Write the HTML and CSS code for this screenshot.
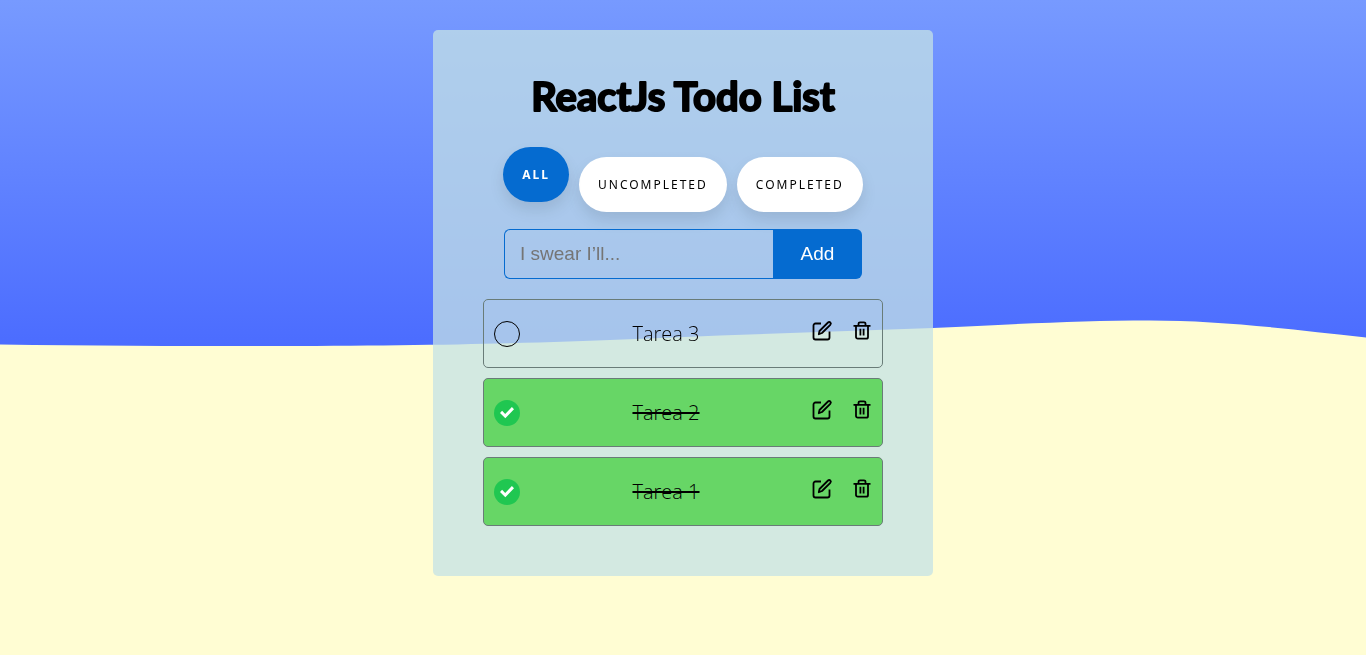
FILE: index.html
```html
<!DOCTYPE html>
<html lang="en">
<head>
<meta charset="utf-8">
<meta name="viewport" content="width=device-width, initial-scale=1">
<title>ReactJs Todo List</title>
<link rel="stylesheet" href="styles.css">
</head>
<body>
<svg class="scene" viewBox="0 0 1366 655" preserveAspectRatio="none" aria-hidden="true">
  <path d="M0 344.5C90 346 180 346 260 346C500 346 610 340 720 335.500L933 328C1020 324 1080 320.500 1150 320.500C1220 320.500 1290 329 1366 337.500V655H0Z"/>
</svg>
<svg class="sprite" aria-hidden="true">
  <symbol id="edit" viewBox="0 0 24 24"><path d="M11 4.500H5.500A2 2 0 0 0 3.500 6.500v12A2 2 0 0 0 5.500 20.500h12a2 2 0 0 0 2-2V12.500M9.500 12 18 3.500a1.600 1.600 0 0 1 2.300 2.300L12 14 8.800 15.200Z"/></symbol>
  <symbol id="trash" viewBox="0 0 24 24"><path d="M3.500 6.800H20.500M6 6.800V18A1.700 1.700 0 0 0 7.700 19.700H16.300a1.700 1.700 0 0 0 1.700-1.700V6.800M8.500 6.500V4.800a1.500 1.500 0 0 1 1.500-1.500h4a1.500 1.500 0 0 1 1.500 1.500v1.700M10.400 9.800v6.700M13.600 9.800v6.700"/></symbol>
</svg>
<main class="panel">
  <h1 class="title"><svg class="title-art"><text class="title-text" x="50%" y="41">ReactJs Todo List</text></svg></h1>
  <nav class="filters" aria-label="Filter tasks">
    <button class="filter filter-active" type="button">All</button>
    <button class="filter" type="button">Uncompleted</button>
    <button class="filter" type="button">Completed</button>
  </nav>
  <form class="add-form">
    <input class="add-input" type="text" aria-label="New task" placeholder="I swear I’ll...">
    <button class="add-button" type="button">Add</button>
  </form>
  <ul class="tasks">
    <li class="task">
      <input class="check" type="checkbox" id="t3">
      <label class="name" for="t3">Tarea 3</label>
      <div class="actions">
        <button class="action" type="button" aria-label="Edit Tarea 3"><svg class="icon"><use href="#edit"/></svg></button>
        <button class="action" type="button" aria-label="Delete Tarea 3"><svg class="icon"><use href="#trash"/></svg></button>
      </div>
    </li>
    <li class="task task-done">
      <input class="check" type="checkbox" id="t2" checked>
      <label class="name" for="t2">Tarea 2</label>
      <div class="actions">
        <button class="action" type="button" aria-label="Edit Tarea 2"><svg class="icon"><use href="#edit"/></svg></button>
        <button class="action" type="button" aria-label="Delete Tarea 2"><svg class="icon"><use href="#trash"/></svg></button>
      </div>
    </li>
    <li class="task task-done">
      <input class="check" type="checkbox" id="t1" checked>
      <label class="name" for="t1">Tarea 1</label>
      <div class="actions">
        <button class="action" type="button" aria-label="Edit Tarea 1"><svg class="icon"><use href="#edit"/></svg></button>
        <button class="action" type="button" aria-label="Delete Tarea 1"><svg class="icon"><use href="#trash"/></svg></button>
      </div>
    </li>
  </ul>
</main>
</body>
</html>
```
FILE: styles.css
```css
* { box-sizing: border-box; }
body {
  margin: 0;
  min-height: 100vh;
  padding: 30px 16px;
  font-family: "Open Sans", sans-serif;
  color: #000;
  background: linear-gradient(#779aff 0, #4b6cff 53vh);
}
.scene { position: fixed; inset: 0; z-index: -1; width: 100%; height: 100%; fill: #fffdd3; }
.sprite { display: none; }
.panel {
  max-width: 500px;
  margin: 0 auto;
  padding: 40px 50px 50px;
  border-radius: 5px;
  background: rgba(196, 225, 229, 0.75);
}
.title { margin: 0 0 30px; }
.title-art { display: block; width: 100%; height: 57px; }
.title-text {
  font: 700 40px Lato, sans-serif;
  text-anchor: middle;
  stroke: #000;
  stroke-width: 2px;
  stroke-linejoin: round;
}
.filters { display: flex; justify-content: center; gap: 10px; margin-bottom: 17px; }
.filter {
  height: 55px;
  padding: 0 19px;
  border: 0;
  border-radius: 45px;
  background: #fff;
  color: #000;
  font: 12px "Noto Sans", sans-serif;
  letter-spacing: 2px;
  text-transform: uppercase;
  box-shadow: 0 8px 15px rgba(0, 0, 0, 0.1);
}
.filter-active {
  background: #056bd0;
  color: #fff;
  font-weight: 700;
  transform: translateY(-10px);
}
.add-form { display: flex; margin: 0 21px 20px; height: 50px; }
.add-input {
  flex: 1;
  min-width: 0;
  padding: 0 15px;
  border: 1px solid #056bd0;
  border-right: 0;
  border-radius: 6px 0 0 6px;
  background: transparent;
  font: 19px "Liberation Sans", sans-serif;
}
.add-input::placeholder { color: #757575; }
.add-button {
  width: 89px;
  border: 0;
  border-radius: 0 6px 6px 0;
  background: #056bd0;
  color: #fff;
  font: 19px "Liberation Sans", sans-serif;
}
.tasks { display: grid; gap: 10px; margin: 0; padding: 0; list-style: none; }
.task {
  display: flex;
  align-items: center;
  height: 69px;
  padding: 0 8px 0 10px;
  border: 1px solid #697c78;
  border-radius: 5px;
}
.task-done { background: #67d666; }
.check {
  appearance: none;
  flex: none;
  width: 26px;
  height: 26px;
  margin: 0;
  border: 1px solid #000;
  border-radius: 50%;
}
.check:checked {
  display: grid;
  place-items: center;
  border: 0;
  background: #20c751;
}
.check:checked::before {
  content: "";
  width: 14px;
  height: 12px;
  background: #fff;
  clip-path: polygon(0 55%, 15% 36%, 37% 62%, 85% 4%, 100% 23%, 38% 98%);
}
.name { flex: 1; padding-left: 2px; font-size: 20px; font-weight: 300; text-align: center; }
.task-done .name { text-decoration: line-through 2px; }
.actions { display: flex; gap: 16px; padding-bottom: 6px; }
.action { display: flex; padding: 0; border: 0; background: none; color: #000; }
.icon {
  width: 24px;
  height: 24px;
  fill: none;
  stroke: currentColor;
  stroke-width: 1.8;
  stroke-linejoin: round;
}
button, label, .check { cursor: pointer; }
```
